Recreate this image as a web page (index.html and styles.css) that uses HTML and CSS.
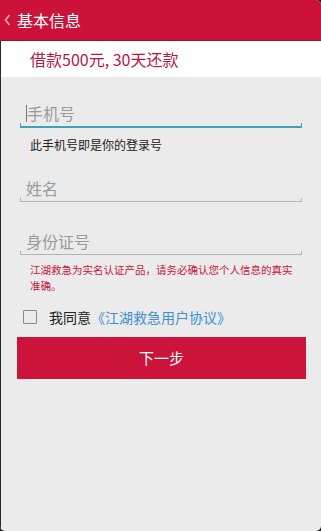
FILE: index.html
```html
<!DOCTYPE html>
<html lang="zh-CN">
<head>
<meta charset="utf-8">
<title>基本信息</title>
<link rel="stylesheet" href="styles.css">
</head>
<body>
<div class="app">
  <header class="topbar">
    <svg class="back" width="7" height="12" viewBox="0 0 7 12"><path d="M5.5 1 L1.5 6 L5.5 11" fill="none" stroke="#f3a3b4" stroke-width="1.6"/></svg>
    <span class="title">基本信息</span>
  </header>
  <div class="content">
    <div class="loan">借款500元, 30天还款</div>
    <div class="form">
      <div class="field first">
        <div class="input"><span class="cursor"></span><span class="ph">手机号</span></div>
        <div class="line active"></div>
      </div>
      <div class="hint">此手机号即是你的登录号</div>
      <div class="field second">
        <div class="input"><span class="ph">姓名</span></div>
        <div class="line"></div>
      </div>
      <div class="field third">
        <div class="input"><span class="ph">身份证号</span></div>
        <div class="line"></div>
      </div>
      <div class="note">江湖救急为实名认证产品，请务必确认您个人信息的真实准确。</div>
      <div class="agree">
        <span class="box"></span>
        <span class="agree-text">我同意</span><span class="link">《江湖救急用户协议》</span>
      </div>
      <div class="btn">下一步</div>
    </div>
  </div>
</div>
</body>
</html>
```
FILE: styles.css
```css
html, body {
  margin: 0;
  padding: 0;
  height: 100%;
  background: #1d1d1d;
}
body {
  font-family: "Noto Sans CJK SC", "Noto Sans", sans-serif;
}
.app {
  height: 531px;
  background: #ebebeb;
  border-radius: 0 5px 5px 5px;
  overflow: hidden;
  display: flex;
  flex-direction: column;
}
.topbar {
  height: 40px;
  background: #cd1239;
  border-bottom: 1px solid #a80d2d;
  display: flex;
  align-items: center;
  padding-left: 4px;
  gap: 6px;
  flex-shrink: 0;
}
.back {
  display: block;
}
.title {
  color: #ffffff;
  font-size: 16px;
  line-height: 20px;
}
.content {
  flex: 1;
  border-left: 1px solid #2a2a2a;
}
.loan {
  height: 36px;
  background: #ffffff;
  color: #b71944;
  font-size: 16px;
  line-height: 36px;
  padding-left: 29px;
}
.form {
  padding: 0 15px 0 15px;
  display: flex;
  flex-direction: column;
}
.field {
  margin: 0 4px 0 4px;
}
.field.first { margin-top: 26px; }
.field.second { margin-top: 25px; }
.field.third { margin-top: 29px; }
.input {
  height: 20px;
  display: flex;
  align-items: center;
  padding-left: 6px;
}
.cursor {
  width: 1px;
  height: 17px;
  background: #777;
}
.ph {
  color: #9a9a9a;
  font-size: 16px;
  line-height: 20px;
}
.line {
  height: 3px;
  border: 1px solid #b3b3b3;
  border-top: none;
}
.line.active {
  height: 3px;
  border: 1px solid #3fa2b8;
  border-top: none;
  border-bottom-width: 2px;
}
.hint {
  margin-top: 9px;
  padding-left: 14px;
  font-size: 12px;
  line-height: 16px;
  color: #222;
}
.note {
  margin-top: 7px;
  padding-left: 14px;
  padding-right: 8px;
  font-size: 10.5px;
  line-height: 16px;
  color: #c7163d;
}
.agree {
  margin-top: 13px;
  height: 20px;
  display: flex;
  align-items: center;
  padding-left: 7px;
}
.box {
  width: 12px;
  height: 12px;
  border: 1.5px solid #8a8a8a;
  border-radius: 1px;
  margin-right: 12px;
}
.agree-text {
  font-size: 14px;
  color: #222;
}
.link {
  font-size: 14px;
  color: #3b8fd4;
}
.btn {
  margin-top: 10px;
  height: 42px;
  background: #cc1339;
  color: #ffffff;
  font-size: 15px;
  line-height: 42px;
  text-align: center;
  margin-left: 1px;
}
```
